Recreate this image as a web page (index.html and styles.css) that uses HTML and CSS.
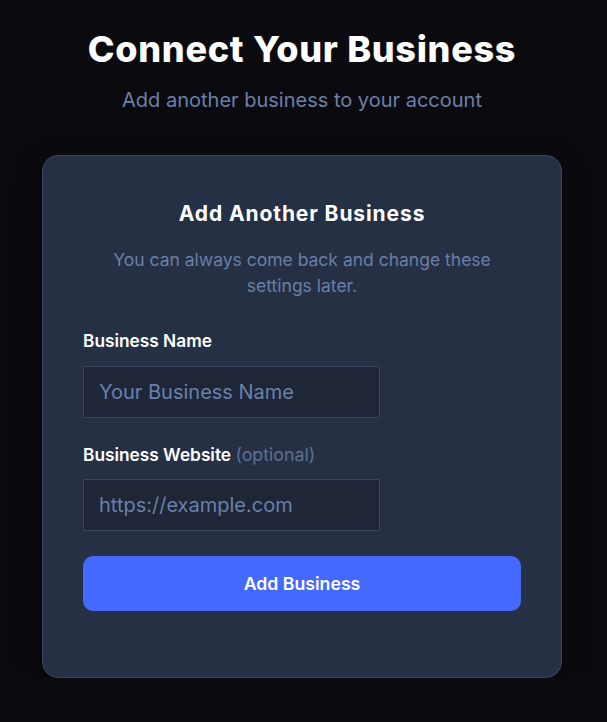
FILE: index.html
```html
<!DOCTYPE html>
<html lang="en">
<head>
<meta charset="utf-8">
<title>Connect Your Business</title>
<link rel="stylesheet" href="styles.css">
</head>
<body>
<main class="page">
  <h1 class="title">Connect Your Business</h1>
  <p class="subtitle">Add another business to your account</p>
  <section class="card">
    <h2 class="card-title">Add Another Business</h2>
    <p class="card-desc">You can always come back and change these settings later.</p>
    <form class="form">
      <label class="label" for="bname">Business Name</label>
      <input class="input" id="bname" type="text" placeholder="Your Business Name">
      <label class="label label-gap" for="bsite">Business Website <span class="optional">(optional)</span></label>
      <input class="input" id="bsite" type="text" placeholder="https://example.com">
      <button class="button" type="button">Add Business</button>
    </form>
  </section>
</main>
</body>
</html>
```
FILE: styles.css
```css
* { box-sizing: border-box; }
html, body {
  margin: 0;
  background: #0a0a0f;
}
body {
  font-family: Inter, "Noto Sans", sans-serif;
  color: #ffffff;
}
.page {
  width: 520px;
  margin: 0 auto 0 42px;
  padding-top: 27px;
  display: flex;
  flex-direction: column;
  align-items: center;
}
.title {
  margin: 0;
  font-size: 36px;
  line-height: 44px;
  font-weight: 800;
  letter-spacing: 0.7px;
  text-align: center;
  white-space: nowrap;
}
.subtitle {
  margin: 15px 0 0;
  font-size: 20px;
  line-height: 28px;
  color: #6a80aa;
  text-align: center;
}
.card {
  margin-top: 41px;
  width: 520px;
  background: #253045;
  border: 1px solid #3a465f;
  border-radius: 16px;
  padding: 40px 40px 66px;
  box-shadow: 0 10px 30px rgba(0,0,0,0.35);
}
.card-title {
  margin: 0;
  font-size: 21px;
  line-height: 36px;
  font-weight: 700;
  letter-spacing: 0.9px;
  text-align: center;
}
.card-desc {
  margin: 15px 0 0;
  font-size: 17.5px;
  line-height: 26px;
  color: #6a7fa6;
  text-align: center;
}
.form {
  display: flex;
  flex-direction: column;
  margin-top: 30px;
}
.label {
  font-size: 17.3px;
  line-height: 24px;
  font-weight: 600;
  color: #ffffff;
}
.label-gap { margin-top: 25px; }
.optional {
  font-size: 17.8px;
  font-weight: 400;
  color: #5c7096;
}
.input {
  margin-top: 13px;
  width: 297px;
  height: 52px;
  background: #1e2638;
  border: 1px solid #3a4660;
  border-radius: 2px;
  padding: 0 15px;
  font-family: Inter, "Noto Sans", sans-serif;
  font-size: 20px;
  color: #ffffff;
  outline: none;
}
.input::placeholder { color: #6a80aa; }
#bsite { margin-top: 12px; }
.button {
  margin-top: 25px;
  height: 55px;
  width: 100%;
  border: none;
  border-radius: 10px;
  background: #4469ff;
  color: #ffffff;
  font-family: Inter, "Noto Sans", sans-serif;
  font-size: 17.7px;
  font-weight: 600;
  cursor: pointer;
}
```
